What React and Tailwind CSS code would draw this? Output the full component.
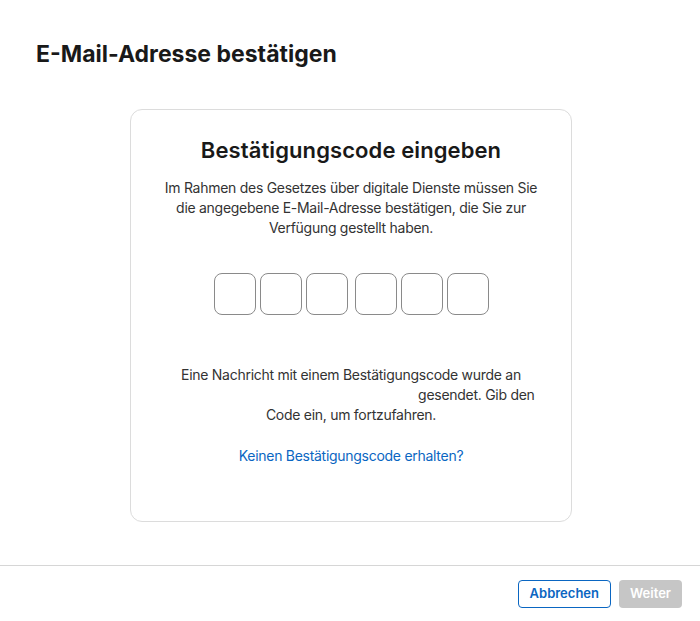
const CodeBox = () => (
  <input
    type="text"
    maxLength={1}
    className="w-[42px] h-[42px] rounded-lg border border-[#8a8a8a] bg-white text-center text-xl outline-none"
  />
)

const App = () => {
  return (
    <div className="w-[700px] h-[621px] bg-white flex flex-col font-['Inter','Liberation_Sans',sans-serif] text-[#1f1f1f]">
      <div className="flex-1 flex flex-col">
        <h1 className="pl-9 pt-[39px] text-[23px] leading-[30px] font-bold text-[#191919]">
          E-Mail-Adresse bestätigen
        </h1>

        <div className="mt-[40px] ml-[130px] w-[442px] h-[413px] border border-[#dcdcdc] rounded-xl flex flex-col items-center">
          <h2 className="mt-[25px] text-[22px] leading-[30px] font-semibold tracking-[0.1px] text-[#191919]">
            Bestätigungscode eingeben
          </h2>
          <p className="mt-[13px] w-[390px] text-center text-sm leading-5 tracking-[-0.28px] text-[#333]">
            Im Rahmen des Gesetzes über digitale Dienste müssen Sie die angegebene E-Mail-Adresse bestätigen, die Sie zur Verfügung gestellt haben.
          </p>

          <div className="mt-[35px] flex gap-[7px]">
            <div className="flex gap-1">
              <CodeBox />
              <CodeBox />
              <CodeBox />
            </div>
            <div className="flex gap-1">
              <CodeBox />
              <CodeBox />
              <CodeBox />
            </div>
          </div>

          <p className="mt-[50px] w-[370px] text-center text-sm leading-5 tracking-[-0.28px] text-[#333]">
            Eine Nachricht mit einem Bestätigungscode wurde an{' '}
            <span className="inline-block w-[247px]"></span> gesendet. Gib den Code ein, um fortzufahren.
          </p>

          <a href="#" className="mt-[21px] text-sm leading-5 tracking-[-0.28px] text-[#0a66c2]">
            Keinen Bestätigungscode erhalten?
          </a>
        </div>
      </div>

      <div className="h-[56px] border-t border-[#d6d6d6] flex items-start justify-end gap-2 pr-[18px] pt-[14px]">
        <button className="h-[28px] px-[11px] rounded border border-[#0a66c2] text-[#0a66c2] text-[13px] font-semibold">
          Abbrechen
        </button>
        <button className="h-[28px] px-[11px] rounded bg-[#c6c6c6] text-white text-[13px] font-semibold">
          Weiter
        </button>
      </div>
    </div>
  )
}

export default App
